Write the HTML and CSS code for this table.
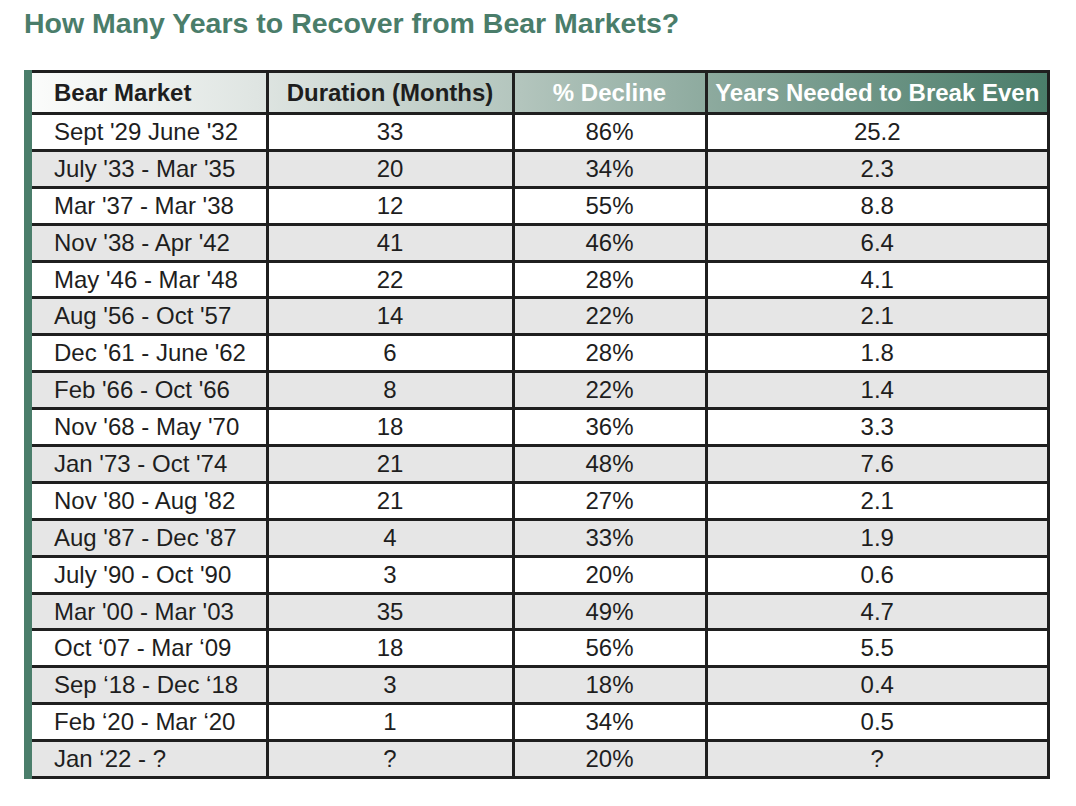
FILE: index.html
```html
<!DOCTYPE html>
<html>
<head>
<meta charset="utf-8">
<link rel="stylesheet" href="styles.css">
</head>
<body>
<h1 class="title">How Many Years to Recover from Bear Markets?</h1>
<div class="frame">
<table class="bear">
<colgroup>
<col class="c1"><col class="c2"><col class="c3"><col class="c4">
</colgroup>
<thead>
<tr class="head"><th>Bear Market</th><th>Duration (Months)</th><th class="light">% Decline</th><th class="light">Years Needed to Break Even</th></tr>
</thead>
<tbody>
<tr><td>Sept '29 June '32</td><td>33</td><td>86%</td><td>25.2</td></tr>
<tr><td>July '33 - Mar '35</td><td>20</td><td>34%</td><td>2.3</td></tr>
<tr><td>Mar '37 - Mar '38</td><td>12</td><td>55%</td><td>8.8</td></tr>
<tr><td>Nov '38 - Apr '42</td><td>41</td><td>46%</td><td>6.4</td></tr>
<tr><td>May '46 - Mar '48</td><td>22</td><td>28%</td><td>4.1</td></tr>
<tr><td>Aug '56 - Oct '57</td><td>14</td><td>22%</td><td>2.1</td></tr>
<tr><td>Dec '61 - June '62</td><td>6</td><td>28%</td><td>1.8</td></tr>
<tr><td>Feb '66 - Oct '66</td><td>8</td><td>22%</td><td>1.4</td></tr>
<tr><td>Nov '68 - May '70</td><td>18</td><td>36%</td><td>3.3</td></tr>
<tr><td>Jan '73 - Oct '74</td><td>21</td><td>48%</td><td>7.6</td></tr>
<tr><td>Nov '80 - Aug '82</td><td>21</td><td>27%</td><td>2.1</td></tr>
<tr><td>Aug '87 - Dec '87</td><td>4</td><td>33%</td><td>1.9</td></tr>
<tr><td>July '90 - Oct '90</td><td>3</td><td>20%</td><td>0.6</td></tr>
<tr><td>Mar '00 - Mar '03</td><td>35</td><td>49%</td><td>4.7</td></tr>
<tr><td>Oct ‘07 - Mar ‘09</td><td>18</td><td>56%</td><td>5.5</td></tr>
<tr><td>Sep ‘18 - Dec ‘18</td><td>3</td><td>18%</td><td>0.4</td></tr>
<tr><td>Feb ‘20 - Mar ‘20</td><td>1</td><td>34%</td><td>0.5</td></tr>
<tr><td>Jan ‘22 - ?</td><td>?</td><td>20%</td><td>?</td></tr>
</tbody>
</table>
</div>
</body>
</html>
```
FILE: styles.css
```css
html, body {
  margin: 0;
  padding: 0;
  background: #ffffff;
}
body {
  font-family: "Liberation Sans", Arial, sans-serif;
  color: #1e1e1e;
}
.title {
  margin: 0;
  padding: 7px 0 0 24px;
  height: 70px;
  box-sizing: border-box;
  font-size: 28.5px;
  line-height: 33px;
  font-weight: bold;
  color: #4a7d6a;
}
.frame {
  margin-left: 24px;
  width: 1018px;
  border-left: 8px solid #4b7e6b;
}
.bear {
  width: 100%;
  border-collapse: collapse;
  table-layout: fixed;
  border-top: 3px solid #1f1f1f;
  border-right: 3px solid #1f1f1f;
  border-bottom: 3px solid #1f1f1f;
}
.c1 { width: 235px; }
.c2 { width: 246px; }
.c3 { width: 193px; }
.c4 { width: auto; }
.bear th, .bear td {
  border: 3px solid #1f1f1f;
  padding: 0;
  font-size: 24px;
  line-height: 28px;
  text-align: center;
  white-space: nowrap;
}
.bear th:first-child, .bear td:first-child {
  border-left: none;
  text-align: left;
  padding-left: 22px;
}
.head {
  background: linear-gradient(90deg, #fbfcfb 0%, #dfe5e2 22%, #b3c5bd 48%, #8aa89c 68%, #4a7d6a 100%);
}
.bear th {
  height: 39px;
  font-weight: bold;
  color: #1e1e1e;
}
.bear th.light {
  color: #ffffff;
}
.bear td {
  height: 33.9px;
}
.bear tbody tr:nth-child(odd) td { background: #ffffff; }
.bear tbody tr:nth-child(even) td { background: #e6e6e6; }
```
